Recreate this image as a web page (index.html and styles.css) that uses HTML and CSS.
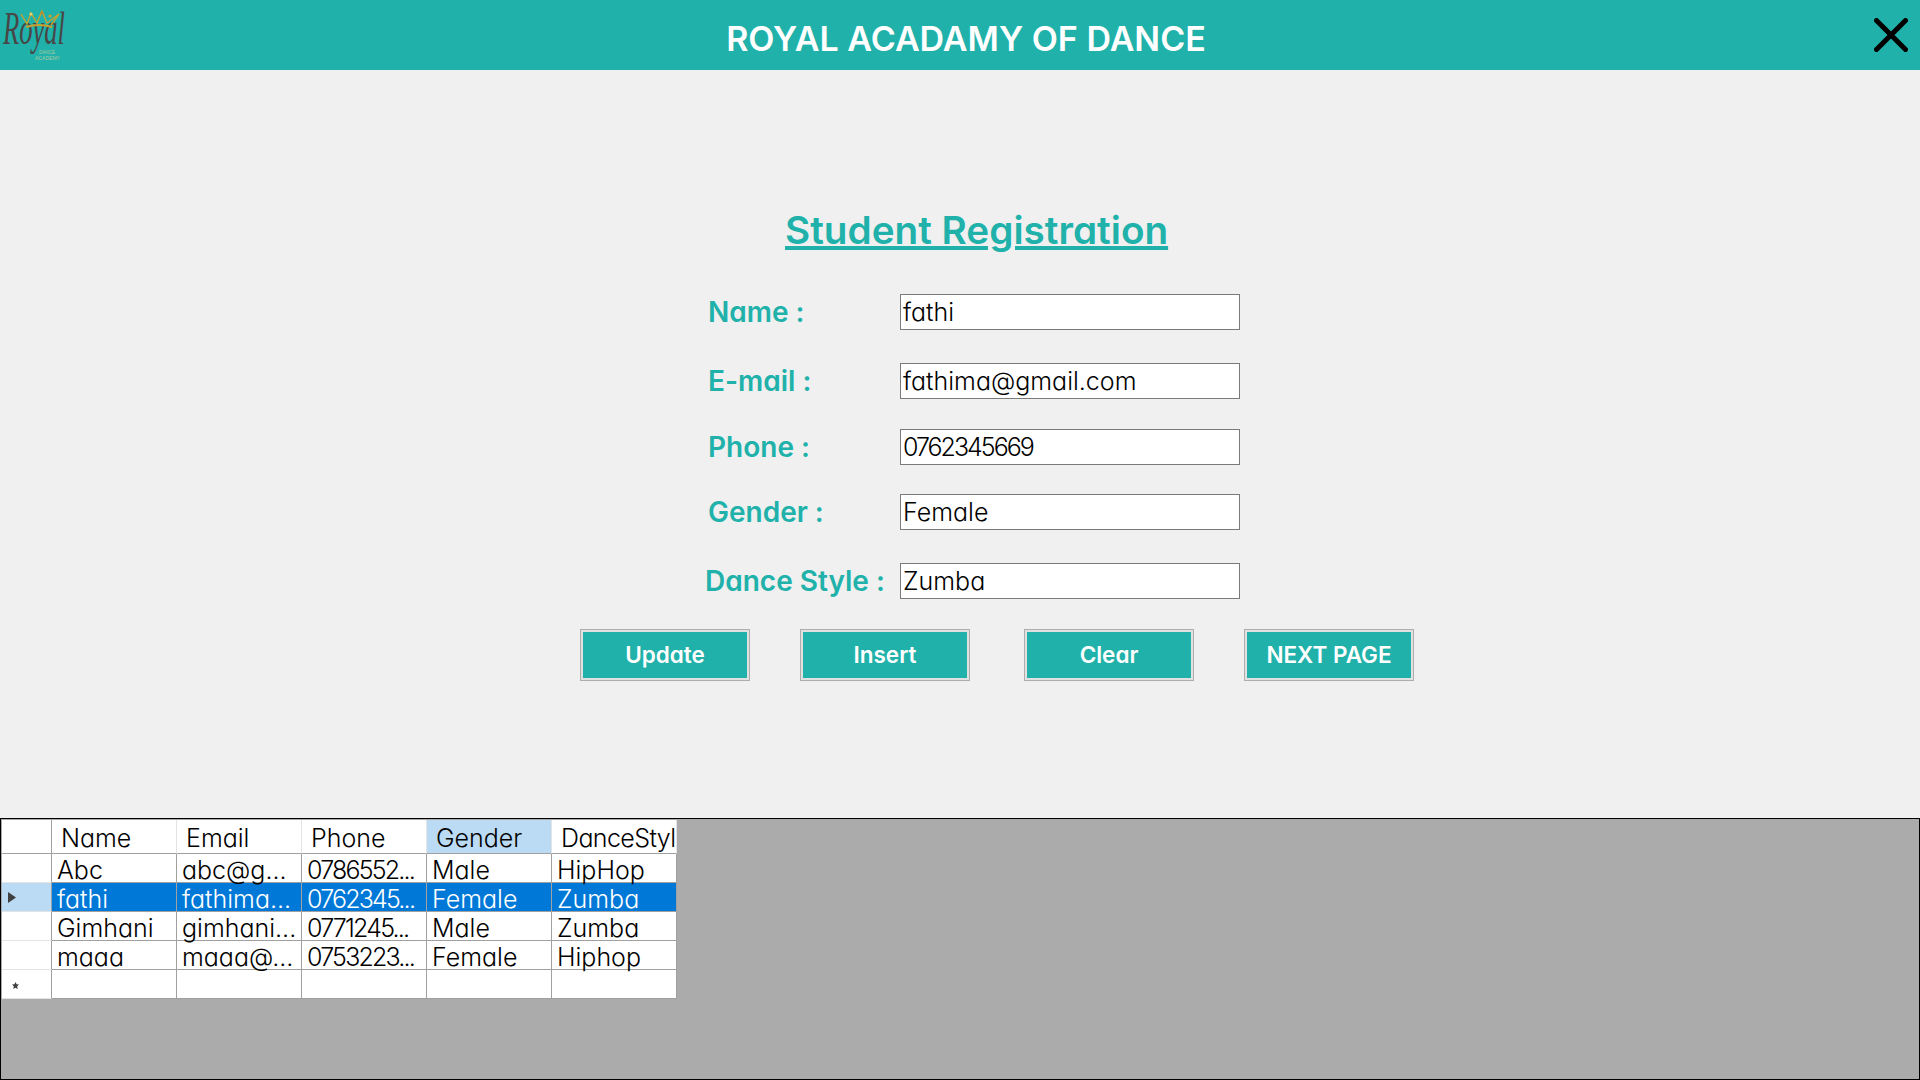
FILE: index.html
```html
<!doctype html>
<html>
<head>
  <meta charset="utf-8">
  <title>Royal Acadamy of Dance</title>
  <link rel="stylesheet" href="styles.css">
</head>
<body>
  <div class="topbar">
    <svg class="logo" viewBox="0 0 70 70" width="70" height="70">
      <text class="logo-script" x="3" y="44" textLength="62" lengthAdjust="spacingAndGlyphs">Royal</text>
      <g fill="none" stroke="#c9a22e" stroke-width="1.4">
        <path d="M21 14 L27 24 L31 13 L37 23 L42 11 L47 23 L59 14 L51 25"/>
        <path d="M26 27 Q39 23 52 27" stroke-width="2"/>
      </g>
      <circle cx="31" cy="14" r="1.6" fill="#e8d36a"/>
      <circle cx="42" cy="13" r="1.6" fill="#b88a2a"/>
      <circle cx="50" cy="16" r="1.6" fill="#c9a22e"/>
      <text class="logo-small" x="39" y="54" textLength="16" lengthAdjust="spacingAndGlyphs">DANCE</text>
      <text class="logo-small" x="35" y="60" textLength="25" lengthAdjust="spacingAndGlyphs">ACADEMY</text>
    </svg>
    <div class="app-title">ROYAL ACADAMY OF DANCE</div>
    <svg class="close" viewBox="0 0 34 34" width="34" height="34">
      <path d="M2.5 2.5 L31.5 31.5 M31.5 2.5 L2.5 31.5" stroke="#000" stroke-width="5" stroke-linecap="round"/>
    </svg>
  </div>

  <div class="main">
    <h1 class="form-title">Student Registration</h1>

    <div class="field field-name">
      <label>Name :</label>
      <input type="text" value="fathi">
    </div>
    <div class="field field-email">
      <label>E-mail :</label>
      <input type="text" value="fathima@gmail.com">
    </div>
    <div class="field field-phone">
      <label>Phone :</label>
      <input class="num" type="text" value="0762345669">
    </div>
    <div class="field field-gender">
      <label>Gender :</label>
      <input type="text" value="Female">
    </div>
    <div class="field field-style">
      <label>Dance Style :</label>
      <input type="text" value="Zumba">
    </div>

    <div class="buttons">
      <button class="btn">Update</button>
      <button class="btn">Insert</button>
      <button class="btn">Clear</button>
      <button class="btn">NEXT PAGE</button>
    </div>
  </div>

  <div class="grid-panel">
    <table class="grid">
      <tr class="head">
        <th class="rowhead"></th>
        <th>Name</th>
        <th>Email</th>
        <th>Phone</th>
        <th class="picked">Gender</th>
        <th class="tight">DanceStyl</th>
      </tr>
      <tr>
        <td class="rowhead"></td>
        <td>Abc</td><td>abc@g...</td><td class="num">0786552...</td><td>Male</td><td>HipHop</td>
      </tr>
      <tr class="selected">
        <td class="rowhead">
          <svg viewBox="0 0 8 11" width="8" height="11"><path d="M0 0 L8 5.5 L0 11 Z" fill="#404040"/></svg>
        </td>
        <td>fathi</td><td>fathima...</td><td class="num">0762345...</td><td>Female</td><td>Zumba</td>
      </tr>
      <tr>
        <td class="rowhead"></td>
        <td>Gimhani</td><td>gimhani...</td><td class="num">0771245...</td><td>Male</td><td>Zumba</td>
      </tr>
      <tr>
        <td class="rowhead"></td>
        <td>maaa</td><td>maaa@...</td><td class="num">0753223...</td><td>Female</td><td>Hiphop</td>
      </tr>
      <tr>
        <td class="rowhead newrow">
          <svg viewBox="0 0 7 7" width="7" height="7"><path d="M3.5 0 L4.6 2.2 L7 2.6 L5.2 4.3 L5.7 7 L3.5 5.7 L1.3 7 L1.8 4.3 L0 2.6 L2.4 2.2 Z" fill="#404040"/></svg>
        </td>
        <td></td><td></td><td></td><td></td><td></td>
      </tr>
    </table>
  </div>
</body>
</html>
```

FILE: styles.css
```css
/* ========== Base ========== */
html, body {
  margin: 0;
  padding: 0;
  height: 100%;
}

body {
  display: flex;
  flex-direction: column;
  width: 1920px;
  height: 1080px;
  overflow: hidden;
  background: #f0f0f0;
  font-family: Inter, "Open Sans", sans-serif;
  font-feature-settings: "cv11" 1;
  color: #000;
}

/* ========== Top Bar ========== */
.topbar {
  display: flex;
  align-items: center;
  height: 70px;
  background: #20b2aa;
  flex-shrink: 0;
}

.logo {
  width: 70px;
  height: 70px;
  flex-shrink: 0;
}

.logo-script {
  font-family: "Liberation Serif", serif;
  font-style: italic;
  font-size: 46px;
  fill: #474747;
}

.logo-small {
  font-family: "Liberation Sans", sans-serif;
  font-size: 5px;
  fill: #a9c9a0;
}

.app-title {
  flex: 1;
  text-align: center;
  padding-top: 6px;
  padding-left: 12px;
  font-size: 34px;
  font-weight: 600;
  color: #fff;
}

.close {
  flex-shrink: 0;
  margin: 0 12px 0 24px;
}

/* ========== Form ========== */
.main {
  flex: 1;
  padding-top: 136px;
}

.form-title {
  margin: 0 0 40px 785px;
  width: 382px;
  font-size: 38.7px;
  line-height: 48px;
  font-weight: 600;
  color: #20b2aa;
  text-decoration: underline;
  text-decoration-thickness: 4px;
  white-space: nowrap;
}

.field {
  display: flex;
  align-items: center;
  height: 36px;
  padding-left: 708px;
}

.field label {
  width: 192px;
  font-size: 28px;
  font-weight: 600;
  color: #20b2aa;
}

.field input {
  width: 340px;
  height: 36px;
  box-sizing: border-box;
  padding: 0 2px;
  border: 1px solid #7a7a7a;
  border-radius: 0;
  background: #fff;
  font-family: inherit;
  font-feature-settings: inherit;
  font-size: 25px;
  font-weight: 300;
  color: #000;
}

.field input.num { letter-spacing: -2px; }

.field-email { margin-top: 33px; }
.field-phone { margin-top: 30px; }
.field-gender { margin-top: 29px; }
.field-style { margin-top: 33px; padding-left: 705px; }
.field-style label { width: 195px; }

.buttons {
  display: flex;
  margin: 30px 0 0 580px;
}

.btn {
  width: 170px;
  height: 52px;
  box-sizing: border-box;
  margin-right: 50px;
  padding: 0 0 2px;
  border: 3px solid #e1e1e1;
  outline: 1px solid #adadad;
  outline-offset: -1px;
  background: #20b2aa;
  color: #fff;
  font-family: inherit;
  font-feature-settings: inherit;
  font-size: 22.5px;
  font-weight: 600;
}

.btn:nth-child(2) { margin-right: 54px; }

/* ========== Data Grid ========== */
.grid-panel {
  height: 262px;
  box-sizing: border-box;
  flex-shrink: 0;
  padding: 1px;
  border: 1px solid #000;
  background: #ababab;
}

.grid {
  table-layout: fixed;
  width: 675px;
  border-collapse: separate;
  border-spacing: 0;
  background: #fff;
  font-size: 25px;
  font-weight: 300;
}

.grid th,
.grid td {
  box-sizing: content-box;
  border-right: 1px solid #a0a0a0;
  border-bottom: 1px solid #a0a0a0;
  white-space: nowrap;
  text-align: left;
  font-weight: 300;
}

.grid td {
  width: 119px;
  height: 23px;
  padding: 5px 0 0 5px;
  line-height: 23px;
}

.grid td.num {
  letter-spacing: -1.8px;
}

.grid th {
  width: 115px;
  height: 31px;
  padding: 2px 0 0 9px;
  border-right-color: #e4e4e4;
}

.grid th.tight {
  letter-spacing: -0.6px;
}

.grid .rowhead {
  width: 49px;
  height: 28px;
  padding: 0;
  border-bottom-color: #e4e4e4;
  border-right-color: #a0a0a0;
}

.grid th.rowhead {
  height: 33px;
  border-bottom-color: #a0a0a0;
}

.grid th.picked {
  background: #bbdaf3;
}

.selected td {
  background: #0078d7;
  color: #fff;
}

.grid .selected .rowhead {
  background: #bbdaf3;
}

.rowhead svg {
  display: block;
  margin: 1px 0 0 6px;
}

.newrow svg {
  margin-left: 10px;
  margin-top: 3px;
}
```
